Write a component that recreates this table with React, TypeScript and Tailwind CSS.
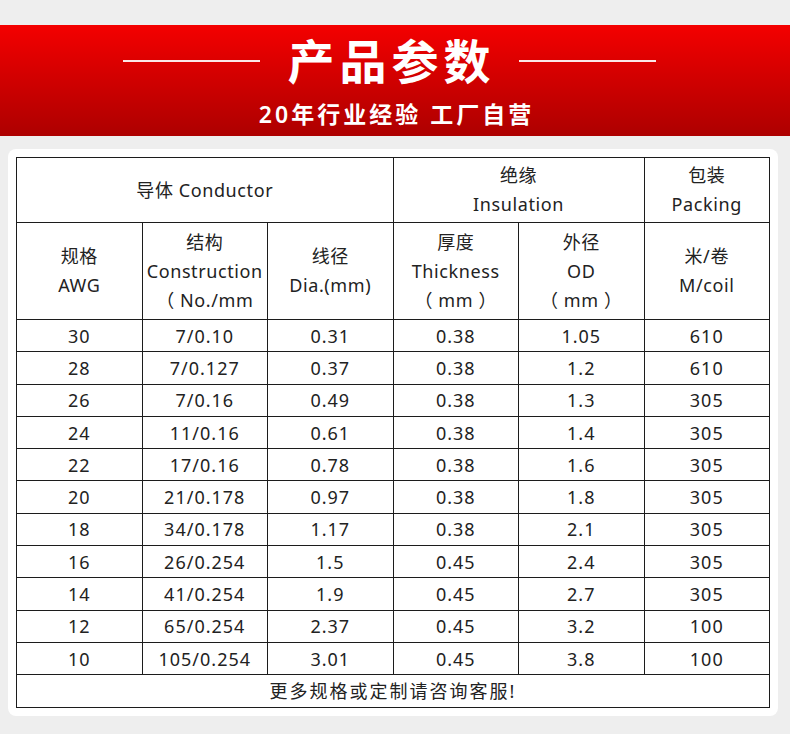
const rows = [
  ["30", "7/0.10", "0.31", "0.38", "1.05", "610"],
  ["28", "7/0.127", "0.37", "0.38", "1.2", "610"],
  ["26", "7/0.16", "0.49", "0.38", "1.3", "305"],
  ["24", "11/0.16", "0.61", "0.38", "1.4", "305"],
  ["22", "17/0.16", "0.78", "0.38", "1.6", "305"],
  ["20", "21/0.178", "0.97", "0.38", "1.8", "305"],
  ["18", "34/0.178", "1.17", "0.38", "2.1", "305"],
  ["16", "26/0.254", "1.5", "0.45", "2.4", "305"],
  ["14", "41/0.254", "1.9", "0.45", "2.7", "305"],
  ["12", "65/0.254", "2.37", "0.45", "3.2", "100"],
  ["10", "105/0.254", "3.01", "0.45", "3.8", "100"],
];

const cell = "border border-[#1c1c1c] text-center align-middle p-0";

export default function App() {
  return (
    <div
      className="w-[790px] h-[734px] bg-[#eeeeee] pt-[25px] text-[#222]"
      style={{ fontFamily: '"Noto Sans", "Noto Sans CJK SC", sans-serif' }}
    >
      {/* banner */}
      <div className="h-[111px] bg-gradient-to-b from-[#f40000] to-[#ad0000] flex flex-col items-center text-white">
        <div className="flex items-center mt-[7px] h-[58px] mr-[12px]">
          <div className="w-[137px] h-[2px] bg-white/90" />
          <h1 className="mx-[23px] text-[47px] leading-none font-bold tracking-[5px] pl-[5px]">产品参数</h1>
          <div className="w-[137px] h-[2px] bg-white/90" />
        </div>
        <p className="mt-[13px] text-[23px] leading-none font-semibold tracking-[3px] pl-[3px]">20年行业经验 工厂自营</p>
      </div>

      {/* card */}
      <div className="mx-[8px] mt-[13px] w-[770px] bg-white rounded-lg p-[8px]">
        <table className="w-full table-fixed border-collapse text-[18px] leading-[29px] tracking-[0.6px]">
          <tbody>
            <tr className="h-[65px]">
              <td colSpan={3} className={cell}>导体 Conductor</td>
              <td colSpan={2} className={cell}>绝缘<br />Insulation</td>
              <td className={cell}>包装<br />Packing</td>
            </tr>
            <tr className="h-[97px]">
              <td className={cell}>规格<br />AWG</td>
              <td className={cell + " whitespace-nowrap"}>结构<br />Construction<br />（ No./mm</td>
              <td className={cell}>线径<br />Dia.(mm)</td>
              <td className={cell}>厚度<br />Thickness<br />（ mm ）</td>
              <td className={cell}>外径<br />OD<br />（ mm ）</td>
              <td className={cell}>米/卷<br />M/coil</td>
            </tr>
            {rows.map((r) => (
              <tr key={r[0]} className="h-[32.3px]">
                {r.map((v, i) => (
                  <td key={i} className={cell + " leading-none tracking-[1px]"}>{v}</td>
                ))}
              </tr>
            ))}
            <tr className="h-[33px]">
              <td colSpan={6} className={cell + " text-[18px] font-normal tracking-[2px] leading-none"}>
                更多规格或定制请咨询客服!
              </td>
            </tr>
          </tbody>
        </table>
      </div>
    </div>
  );
}
